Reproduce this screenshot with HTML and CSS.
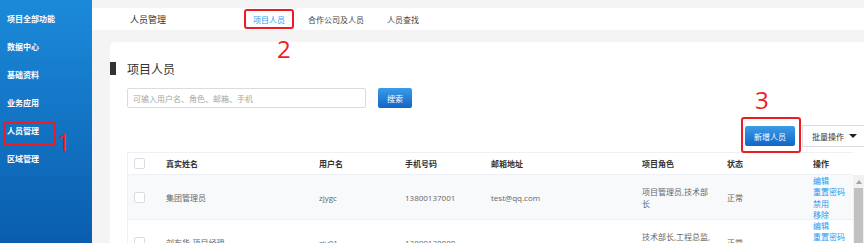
FILE: index.html
```html
<!DOCTYPE html>
<html lang="zh-CN">
<head>
    <meta charset="UTF-8">
    <meta name="viewport" content="width=device-width, initial-scale=1.0">
    <title>项目人员</title>
    <link rel="stylesheet" href="styles.css">
</head>
<body>
    <div class="app">
        <aside class="sidebar">
            <a class="side-item">项目全部功能</a>
            <a class="side-item">数据中心</a>
            <a class="side-item">基础资料</a>
            <a class="side-item">业务应用</a>
            <a class="side-item marked">人员管理<span class="mark-num num-1">1</span></a>
            <a class="side-item">区域管理</a>
        </aside>

        <main class="main">
            <div class="topbar">
                <span class="crumb">人员管理</span>
                <nav class="tabs">
                    <a class="tab active marked">项目人员<span class="mark-num num-2">2</span></a>
                    <a class="tab">合作公司及人员</a>
                    <a class="tab">人员查找</a>
                </nav>
            </div>

            <section class="card">
                <h2 class="card-title">项目人员</h2>

                <div class="search-row">
                    <input type="text" class="search-input" placeholder="可输入用户名、角色、邮箱、手机">
                    <button class="btn btn-blue btn-search">搜索</button>
                </div>

                <div class="toolbar">
                    <span class="add-wrap marked">
                        <button class="btn btn-blue btn-add">新增人员</button>
                        <span class="mark-num num-3">3</span>
                    </span>
                    <div class="dropdown">批量操作 <i class="caret"></i></div>
                </div>

                <div class="table">
                    <div class="row head">
                        <div class="cell"><span class="check"></span></div>
                        <div class="cell">真实姓名</div>
                        <div class="cell">用户名</div>
                        <div class="cell">手机号码</div>
                        <div class="cell">邮箱地址</div>
                        <div class="cell">项目角色</div>
                        <div class="cell">状态</div>
                        <div class="cell">操作</div>
                    </div>
                    <div class="table-body">
                        <div class="rows">
                            <div class="row alt">
                                <div class="cell"><span class="check"></span></div>
                                <div class="cell">集团管理员</div>
                                <div class="cell">zjygc</div>
                                <div class="cell">13800137001</div>
                                <div class="cell">test@qq.com</div>
                                <div class="cell role">项目管理员,技术部长</div>
                                <div class="cell">正常</div>
                                <div class="cell ops">
                                    <a>编辑</a><a>重置密码</a><a>禁用</a><a>移除</a>
                                </div>
                            </div>
                            <div class="row">
                                <div class="cell"><span class="check"></span></div>
                                <div class="cell">刘布华-项目经理</div>
                                <div class="cell">zjy01</div>
                                <div class="cell">13800138000</div>
                                <div class="cell"></div>
                                <div class="cell role">技术部长,工程总监,项目经理</div>
                                <div class="cell">正常</div>
                                <div class="cell ops">
                                    <a>编辑</a><a>重置密码</a><a>禁用</a><a>移除</a>
                                </div>
                            </div>
                        </div>
                        <div class="scrollbar">
                            <span class="scroll-up"></span>
                            <span class="scroll-thumb"></span>
                        </div>
                    </div>
                </div>
            </section>
        </main>
    </div>
</body>
</html>
```

FILE: styles.css
```css
* {
    box-sizing: border-box;
}
body {
    margin: 0;
    width: 864px;
    height: 243px;
    overflow: hidden;
    font-family: "Open Sans", "Noto Sans CJK SC", sans-serif;
    font-size: 8px;
    color: #666;
}
.app {
    display: flex;
    height: 243px;
}

/* sidebar */
.sidebar {
    width: 92px;
    flex-shrink: 0;
    padding-top: 5px;
    background: linear-gradient(#1c8ad9, #0a5dae);
}
.side-item {
    display: block;
    position: relative;
    height: 28px;
    line-height: 28px;
    padding-left: 7px;
    color: #fff;
    font-family: "Noto Sans CJK SC", sans-serif;
    font-weight: 700;
    font-size: 8px;
}

/* red annotations */
.side-item.marked::after {
    content: "";
    position: absolute;
    left: 3px;
    top: 5px;
    width: 49px;
    height: 20px;
    border: 2px solid #ec1b24;
    border-radius: 3px;
}
.mark-num {
    position: absolute;
    font-family: "Open Sans", sans-serif;
    font-weight: 400;
    font-size: 24px;
    line-height: 24px;
    color: #f21c1c;
}
.num-1 {
    left: 57px;
    top: 13px;
}
.num-2 {
    left: 33px;
    top: 29px;
}
.num-3 {
    left: 10px;
    top: -38px;
}

/* main */
.main {
    flex: 1;
    min-width: 0;
    overflow: hidden;
    padding-top: 8px;
    background-color: #f4f4f4;
}
.topbar {
    display: flex;
    align-items: center;
    height: 22px;
    padding-left: 38px;
    background-color: #fff;
}
.crumb {
    font-family: "Noto Sans CJK SC", sans-serif;
    font-size: 9px;
    color: #333;
}
.tabs {
    display: flex;
    gap: 5px;
    height: 100%;
    margin-left: 78px;
}
.tab {
    position: relative;
    display: flex;
    align-items: center;
    padding: 0 9px;
    font-family: "Noto Sans CJK SC", sans-serif;
    font-size: 8px;
    color: #444;
}
.tab.active {
    color: #1a9cf2;
}
.tab.marked::after {
    content: "";
    position: absolute;
    left: 0;
    right: 0;
    top: 1px;
    bottom: 1px;
    border: 2px solid #ec1b24;
    border-radius: 3px;
}

.card {
    width: 770px;
    height: 220px;
    margin: 12px 0 0 18px;
    padding: 16px 0 0 17px;
    background-color: #fff;
    border-radius: 5px 0 0 0;
}
.card-title {
    display: flex;
    align-items: center;
    height: 20px;
    margin: 0 0 0 -17px;
    font-family: "Noto Sans CJK SC", sans-serif;
    font-size: 12px;
    font-weight: 400;
    color: #333;
}
.card-title::before {
    content: "";
    width: 6px;
    height: 13px;
    margin-right: 11px;
    background-color: #333;
}

.search-row {
    display: flex;
    height: 20px;
    margin-top: 10px;
}
.search-input {
    width: 239px;
    height: 20px;
    padding: 0 5px;
    border: 1px solid #d8dde4;
    border-radius: 2px;
    font-family: inherit;
    font-size: 8px;
    outline: none;
}
.search-input::placeholder {
    color: #a6a6a6;
}
.btn {
    height: 20px;
    padding: 0;
    border: none;
    border-radius: 2px;
    font-family: "Noto Sans CJK SC", sans-serif;
    font-size: 8px;
    cursor: pointer;
}
.btn-blue {
    background: linear-gradient(#3b9ce8, #1165c6);
    color: #fff;
}
.btn-search {
    width: 34px;
    margin-left: 12px;
}

.toolbar {
    display: flex;
    align-items: center;
    justify-content: flex-end;
    gap: 7px;
    height: 22px;
    margin-top: 17px;
}
.add-wrap {
    position: relative;
    display: flex;
}
.add-wrap.marked::after {
    content: "";
    position: absolute;
    left: -4px;
    right: -6px;
    top: -9px;
    bottom: -7px;
    border: 2px solid #ec1b24;
    border-radius: 3px;
}
.btn-add {
    width: 50px;
}
.dropdown {
    display: flex;
    align-items: center;
    width: 78px;
    height: 22px;
    padding-left: 9px;
    border: 1px solid #dcdcdc;
    font-family: "Noto Sans CJK SC", sans-serif;
    color: #333;
}
.caret {
    width: 0;
    height: 0;
    margin-left: 5px;
    border-left: 4px solid transparent;
    border-right: 4px solid transparent;
    border-top: 4px solid #222;
}

/* table */
.table {
    width: 737px;
    margin-top: 5px;
}
.row {
    display: grid;
    grid-template-columns: 38px 153px 86px 86px 151px 85px 86px 41px;
    width: 726px;
    height: 45px;
    border-left: 1px solid #eef0f3;
    border-bottom: 1px solid #edf0f4;
}
.row.head {
    height: 23px;
    border-top: 1px solid #edf0f4;
    font-family: "Noto Sans CJK SC", sans-serif;
    font-weight: 700;
    color: #333;
}
.row.alt {
    background-color: #f8f9fb;
}
.cell {
    display: flex;
    align-items: center;
    min-width: 0;
    line-height: 12px;
}
.cell:first-child {
    padding-left: 6px;
}
.check {
    width: 11px;
    height: 11px;
    border: 1px solid #d9dce2;
    border-radius: 2px;
    background-color: #fff;
}
.role {
    padding-right: 14px;
}
.ops {
    flex-direction: column;
    align-items: flex-start;
    justify-content: center;
    line-height: 11.25px;
    white-space: nowrap;
}
.ops a {
    color: #1d9bf0;
    font-family: "Noto Sans CJK SC", sans-serif;
}

.table-body {
    display: flex;
}
.scrollbar {
    display: flex;
    flex-direction: column;
    align-items: center;
    width: 11px;
    height: 70px;
    background-color: #f1f1f1;
}
.scroll-up {
    width: 0;
    height: 0;
    margin-top: 5px;
    border-left: 3px solid transparent;
    border-right: 3px solid transparent;
    border-bottom: 4px solid #a3a3a3;
}
.scroll-thumb {
    width: 9px;
    flex: 1;
    margin-top: 4px;
    background-color: #c1c1c1;
}
```
